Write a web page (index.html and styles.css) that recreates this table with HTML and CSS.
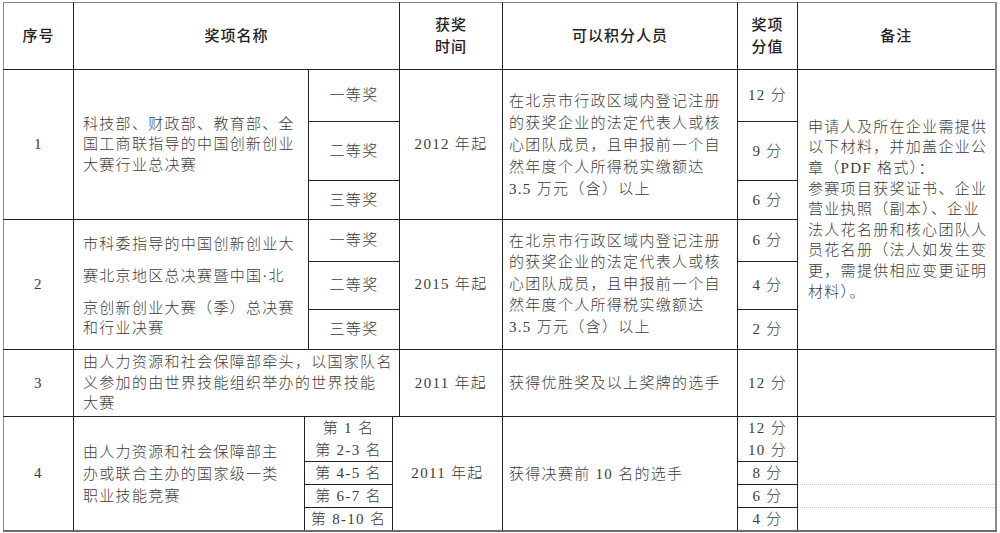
FILE: index.html
```html
<!DOCTYPE html>
<html lang="zh-CN">
<head>
<meta charset="utf-8">
<title>奖项积分表</title>
<link rel="stylesheet" href="styles.css">
</head>
<body>
<table class="awards">
  <colgroup>
    <col class="w-num"><col class="w-name"><col class="w-gap1"><col class="w-sub"><col class="w-gap2"><col class="w-time"><col class="w-who"><col class="w-score"><col class="w-note">
  </colgroup>
  <tr class="h">
    <th class="num top">序号</th>
    <th class="top" colspan="4">奖项名称</th>
    <th class="top">获奖<br>时间</th>
    <th class="top">可以积分人员</th>
    <th class="top">奖项<br>分值</th>
    <th class="top right">备注</th>
  </tr>
  <tr class="r1a">
    <td class="num" rowspan="3">1</td>
    <td class="name" colspan="2" rowspan="3">科技部、财政部、教育部、全<br>国工商联指导的中国创新创业<br>大赛行业总决赛</td>
    <td colspan="2">一等奖</td>
    <td rowspan="3">2012 年起</td>
    <td class="who" rowspan="3">在北京市行政区域内登记注册<br>的获奖企业的法定代表人或核<br>心团队成员，且申报前一个自<br>然年度个人所得税实缴额达<br>3.5 万元（含）以上</td>
    <td>12 分</td>
    <td class="note right" rowspan="6">申请人及所在企业需提供<br>以下材料，并加盖企业公<br>章（PDF 格式）：<br>参赛项目获奖证书、企业<br>营业执照（副本）、企业<br>法人花名册和核心团队人<br>员花名册（法人如发生变<br>更，需提供相应变更证明<br>材料）。</td>
  </tr>
  <tr class="r1b">
    <td colspan="2">二等奖</td>
    <td>9 分</td>
  </tr>
  <tr class="r1c">
    <td colspan="2">三等奖</td>
    <td>6 分</td>
  </tr>
  <tr class="r2a">
    <td class="num" rowspan="3">2</td>
    <td class="name name2" colspan="2" rowspan="3"><span class="wide">市科委指导的中国创新创业大</span><span class="wide">赛北京地区总决赛暨中国·北</span><span class="wide">京创新创业大赛（季）总决赛</span><span class="last">和行业决赛</span></td>
    <td colspan="2">一等奖</td>
    <td rowspan="3">2015 年起</td>
    <td class="who who2" rowspan="3">在北京市行政区域内登记注册<br>的获奖企业的法定代表人或核<br>心团队成员，且申报前一个自<br>然年度个人所得税实缴额达<br>3.5 万元（含）以上</td>
    <td>6 分</td>
  </tr>
  <tr class="r2b">
    <td colspan="2">二等奖</td>
    <td>4 分</td>
  </tr>
  <tr class="r2c">
    <td colspan="2">三等奖</td>
    <td>2 分</td>
  </tr>
  <tr class="r3">
    <td class="num">3</td>
    <td class="name" colspan="4">由人力资源和社会保障部牵头，以国家队名<br>义参加的由世界技能组织举办的世界技能<br>大赛</td>
    <td>2011 年起</td>
    <td class="who">获得优胜奖及以上奖牌的选手</td>
    <td>12 分</td>
    <td class="right"></td>
  </tr>
  <tr class="r4a">
    <td class="num bottom" rowspan="4">4</td>
    <td class="name name4 bottom" rowspan="4">由人力资源和社会保障部主<br>办或联合主办的国家级一类<br>职业技能竞赛</td>
    <td class="rank" colspan="2">第 1 名<br>第 2-3 名</td>
    <td class="bottom" colspan="2" rowspan="4">2011 年起</td>
    <td class="who bottom" rowspan="4">获得决赛前 10 名的选手</td>
    <td class="rank">12 分<br>10 分</td>
    <td class="right dot-b" rowspan="2"></td>
  </tr>
  <tr class="r4b">
    <td class="rank" colspan="2">第 4-5 名</td>
    <td class="rank">8 分</td>
  </tr>
  <tr class="r4c">
    <td class="rank" colspan="2">第 6-7 名</td>
    <td class="rank">6 分</td>
    <td class="right dot-t dot-b"></td>
  </tr>
  <tr class="r4d">
    <td class="rank bottom" colspan="2">第 8-10 名</td>
    <td class="rank bottom">4 分</td>
    <td class="right dot-t bottom"></td>
  </tr>
</table>
</body>
</html>
```

FILE: styles.css
```css
body {
  margin: 0;
  background: #ffffff;
  font-family: "Liberation Serif", "Noto Sans CJK SC", serif;
  color: #3c3c3c;
}

.awards {
  margin: 2px 0 0 3px;
  border-collapse: collapse;
  table-layout: fixed;
  width: 992px;
  font-size: 15px;
  letter-spacing: 1.3px;
}

.w-num { width: 70px; }
.w-name { width: 231px; }
.w-gap1 { width: 4px; }
.w-sub { width: 84px; }
.w-gap2 { width: 7px; }
.w-time { width: 103px; }
.w-who { width: 235px; }
.w-score { width: 60px; }
.w-note { width: 198px; }

.awards th,
.awards td {
  border: 1px solid #222;
  padding: 0;
  text-align: center;
  vertical-align: middle;
  line-height: 21px;
  font-weight: 300;
}

.awards th {
  font-weight: 500;
  line-height: 22px;
  color: #222;
  letter-spacing: 1px;
}

.awards .top { border-top-color: #8a8a8a; }
.awards .num { border-left-color: #8a8a8a; }
.awards .right { border-right: 2px solid #8a8a8a; }
.awards .bottom { border-bottom: 2px solid #6a6a6a; }

.h { height: 67px; }
.r1a { height: 52px; }
.r1b { height: 59px; }
.r1c { height: 39px; }
.r2a { height: 42px; }
.r2b { height: 48px; }
.r2c { height: 40px; }
.r3 { height: 67px; }
.r4a { height: 45px; }
.r4b { height: 23px; }
.r4c { height: 22px; }
.r4d { height: 22px; }

.awards .name {
  text-align: left;
  padding: 0 4px 0 9px;
  line-height: 20.5px;
}

.awards .name2 span { display: block; }
.awards .name2 .wide { line-height: 32px; }
.awards .name2 .last { line-height: 20px; margin-top: -6px; padding-bottom: 4px; }

.awards .name4 { line-height: 22px; }

.awards .who {
  text-align: left;
  padding: 0 4px 0 6px;
  line-height: 22px;
}

.awards .who2 { line-height: 21.5px; }

.awards .note {
  text-align: left;
  padding: 0 4px 0 10px;
  line-height: 20.6px;
}

.awards .rank { line-height: 22px; }

.awards .dot-b { border-bottom: 1px dotted #c8c8c8; }
.awards .dot-t { border-top: 1px dotted #c8c8c8; }
.awards .dot-t.bottom { border-bottom: 2px solid #6a6a6a; }
```
